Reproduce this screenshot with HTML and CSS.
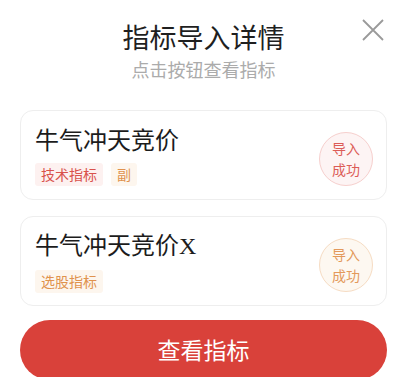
FILE: index.html
```html
<!DOCTYPE html>
<html lang="zh-CN">
<head>
<meta charset="utf-8">
<title>指标导入详情</title>
<link rel="stylesheet" href="styles.css">
</head>
<body>
<div class="sheet">
  <header class="header">
    <h1 class="title">指标导入详情</h1>
    <p class="subtitle">点击按钮查看指标</p>
    <button class="close" aria-label="关闭">
      <svg width="22" height="22" viewBox="0 0 22 22"><path d="M1 1L21 21M21 1L1 21" stroke="#9a9a9a" stroke-width="1.8" fill="none"/></svg>
    </button>
  </header>
  <div class="list">
    <div class="card">
      <div class="info">
        <div class="name">牛气冲天竞价</div>
        <div class="tags">
          <span class="tag tag-red">技术指标</span>
          <span class="tag tag-orange">副</span>
        </div>
      </div>
      <div class="badge badge-red">导入<br>成功</div>
    </div>
    <div class="card">
      <div class="info">
        <div class="name">牛气冲天竞价<span class="latin">X</span></div>
        <div class="tags">
          <span class="tag tag-orange">选股指标</span>
        </div>
      </div>
      <div class="badge badge-orange">导入<br>成功</div>
    </div>
  </div>
  <button class="primary">查看指标</button>
</div>
</body>
</html>
```
FILE: styles.css
```css
html, body {
  margin: 0;
  padding: 0;
  background: #ffffff;
}
body {
  font-family: "Noto Sans CJK SC", "Noto Sans", sans-serif;
  color: #222;
  overflow: hidden;
}
.sheet {
  padding: 0 20px;
}
.header {
  position: relative;
  padding-top: 21px;
  text-align: center;
}
.title {
  margin: 0;
  font-size: 27px;
  line-height: 32px;
  font-weight: 400;
  color: #1f1f1f;
}
.subtitle {
  margin: 4px 0 0;
  font-size: 18px;
  line-height: 24px;
  color: #ababab;
}
.close {
  position: absolute;
  top: 19px;
  right: 3px;
  width: 22px;
  height: 22px;
  padding: 0;
  border: 0;
  background: none;
}
.close svg { display: block; }
.list {
  margin-top: 29px;
  display: flex;
  flex-direction: column;
  gap: 16px;
}
.card {
  display: flex;
  align-items: center;
  justify-content: space-between;
  border: 1px solid #eeeeee;
  border-radius: 13px;
  padding: 12px 13px 13px 14px;
  height: 63px;
  box-sizing: content-box;
}
.name {
  font-size: 24px;
  line-height: 30px;
  color: #1c1c1c;
}
.latin {
  font-family: "Liberation Serif", serif;
}
.tags {
  margin-top: 9px;
  display: flex;
  gap: 8px;
}
.tag {
  font-size: 14px;
  line-height: 23px;
  padding: 0 6px;
  border-radius: 3px;
}
.tag-red {
  color: #d9524c;
  background: #fdf1f0;
}
.tag-orange {
  color: #e0924d;
  background: #fdf6ee;
}
.badge {
  width: 52px;
  height: 52px;
  margin-top: 9px;
  border-radius: 50%;
  font-size: 14px;
  line-height: 21px;
  display: flex;
  align-items: center;
  justify-content: center;
  text-align: center;
}
.badge-red {
  color: #dc5c57;
  background: #fdf4f4;
  border: 1px solid #f6cfcd;
}
.badge-orange {
  color: #e3995b;
  background: #fdf8f1;
  border: 1px solid #f6dcc3;
}
.primary {
  display: block;
  width: 100%;
  margin-top: 14px;
  height: 60px;
  border: 0;
  border-radius: 30px;
  background: #d9413a;
  color: #ffffff;
  font-family: "Noto Sans CJK SC", "Noto Sans", sans-serif;
  font-size: 23px;
  line-height: 30px;
  padding: 0 0 2px;
}
```
